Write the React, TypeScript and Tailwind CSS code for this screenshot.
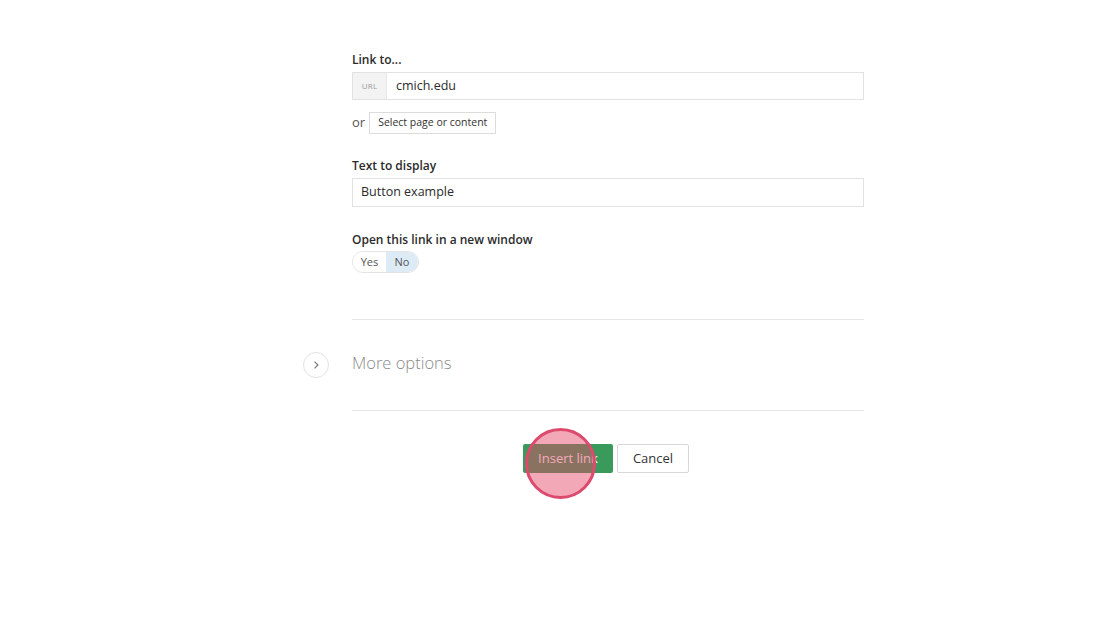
import React from "react";

export default function App() {
  return (
    <div
      className="w-[1120px] h-[626px] bg-white relative overflow-hidden text-[#333]"
      style={{ fontFamily: '"Open Sans", "Liberation Sans", sans-serif' }}
    >
      <div className="ml-[352px] w-[512px] pt-[51px] flex flex-col">
        <div className="text-[12px] leading-[18px] font-semibold text-[#2b2b2b]">Link to...</div>
        <div className="mt-[3px] h-[28px] flex border border-[#e2e2e2] bg-white">
          <div className="w-[34px] bg-[#f3f3f3] border-r border-[#e8e8e8] flex items-center justify-center text-[8px] tracking-wide text-[#9a9a9a]">
            URL
          </div>
          <div className="flex items-center pl-[9px] text-[12.5px] text-[#2b2b2b]">cmich.edu</div>
        </div>
        <div className="mt-[12px] flex items-center">
          <span className="text-[13px] text-[#555] leading-[18px] -mt-[2px]">or</span>
          <div className="ml-[4px] h-[22px] px-[8px] border border-[#dcdcdc] flex items-center text-[10.5px] text-[#333] bg-white">
            Select page or content
          </div>
        </div>
        <div className="mt-[23px] text-[12px] leading-[18px] font-semibold text-[#2b2b2b]">Text to display</div>
        <div className="mt-[3px] h-[29px] flex items-center border border-[#e2e2e2] pl-[8px] text-[12.5px] text-[#2b2b2b]">
          Button example
        </div>
        <div className="mt-[24px] text-[12px] leading-[18px] font-semibold text-[#2b2b2b]">Open this link in a new window</div>
        <div className="mt-[2px] flex">
          <div className="h-[22px] flex border border-[#e4e4e4] rounded-full overflow-hidden text-[11px]">
            <div className="w-[33px] flex items-center justify-center text-[#555] bg-white">Yes</div>
            <div className="w-[32px] flex items-center justify-center text-[#555] bg-[#dcebf5]">No</div>
          </div>
        </div>
        <div className="mt-[46px] border-t border-[#e6e6e6]"></div>
        <div className="h-[90px] flex items-center -ml-[49px]">
          <div className="w-[26px] h-[26px] rounded-full border border-[#e2e2e2] flex items-center justify-center">
            <svg width="10" height="10" viewBox="0 0 10 10">
              <path d="M3.5 1.6 L6.9 5 L3.5 8.4" fill="none" stroke="#777" strokeWidth="1.2" />
            </svg>
          </div>
          <div className="ml-[23px] -mt-[4px] text-[16.5px] font-light text-[#8a8a8a]">More options</div>
        </div>
        <div className="border-t border-[#e6e6e6]"></div>
        <div className="mt-[33px] flex justify-center gap-[4px] pr-[4px]">
          <div className="w-[90px] h-[29px] rounded-[2px] bg-[#3a9a5b] flex items-center justify-center text-[13px] text-white">
            Insert link
          </div>
          <div className="w-[72px] h-[29px] rounded-[2px] border border-[#d8d8d8] bg-white flex items-center justify-center text-[13px] text-[#333]">
            Cancel
          </div>
        </div>
      </div>
      <div className="absolute left-[525px] top-[428px] w-[71px] h-[71px] rounded-full border-[3px] border-[#dc4a6d] bg-[rgba(229,71,103,0.47)]"></div>
    </div>
  );
}
